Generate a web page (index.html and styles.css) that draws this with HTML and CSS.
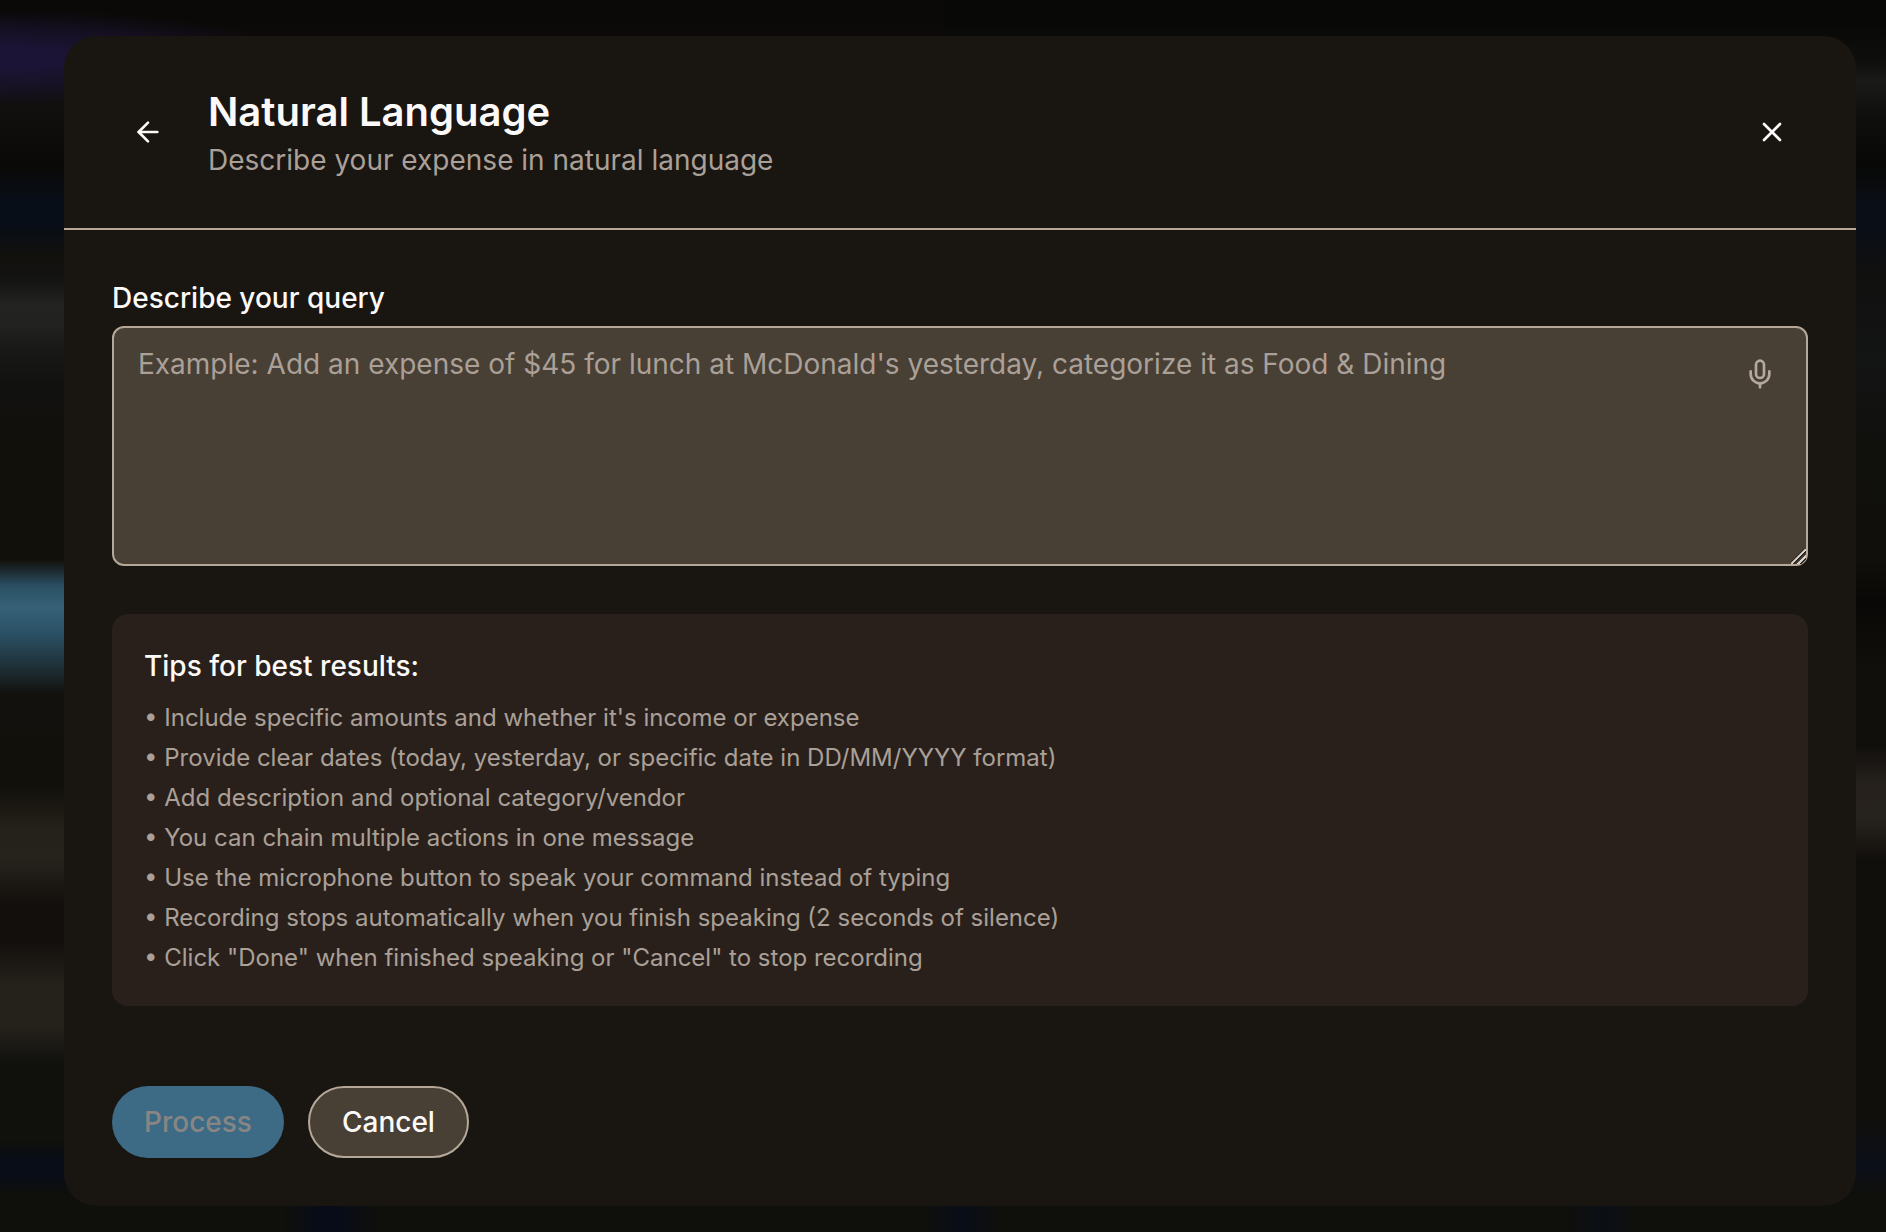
FILE: index.html
```
<!DOCTYPE html>
<html lang="en">
<head>
    <meta charset="UTF-8" />
    <meta name="viewport" content="width=device-width, initial-scale=1" />
    <title>Natural Language</title>
    <link rel="stylesheet" href="styles.css">
</head>
<body>
    <div class="overlay">
        <main class="modal" role="dialog" aria-labelledby="modal-title">
            <header class="modal-header">
                <button type="button" class="icon-btn" aria-label="Back">
                    <svg class="icon" viewBox="0 0 24 24"><path d="m12 19-7-7 7-7"/><path d="M19 12H5"/></svg>
                </button>
                <div class="heading">
                    <h1 id="modal-title">Natural Language</h1>
                    <p>Describe your expense in natural language</p>
                </div>
                <button type="button" class="icon-btn" aria-label="Close">
                    <svg class="icon" viewBox="0 0 24 24"><path d="M18 6 6 18"/><path d="m6 6 12 12"/></svg>
                </button>
            </header>
            <form class="modal-body">
                <label for="query">Describe your query</label>
                <div class="field">
                    <textarea id="query" placeholder="Example: Add an expense of $45 for lunch at McDonald's yesterday, categorize it as Food &amp; Dining"></textarea>
                    <button type="button" class="mic-btn" aria-label="Record">
                        <svg class="icon" viewBox="0 0 24 24"><path d="M12 2a3 3 0 0 0-3 3v7a3 3 0 0 0 6 0V5a3 3 0 0 0-3-3Z"/><path d="M19 10v2a7 7 0 0 1-14 0v-2"/><path d="M12 19v3"/></svg>
                    </button>
                </div>
                <section class="tips">
                    <h2>Tips for best results:</h2>
                    <ul>
                        <li>• Include specific amounts and whether it's income or expense</li>
                        <li>• Provide clear dates (today, yesterday, or specific date in DD/MM/YYYY format)</li>
                        <li>• Add description and optional category/vendor</li>
                        <li>• You can chain multiple actions in one message</li>
                        <li>• Use the microphone button to speak your command instead of typing</li>
                        <li>• Recording stops automatically when you finish speaking (2 seconds of silence)</li>
                        <li>• Click "Done" when finished speaking or "Cancel" to stop recording</li>
                    </ul>
                </section>
                <div class="actions">
                    <button type="submit" class="btn btn-primary" disabled>Process</button>
                    <button type="button" class="btn btn-secondary">Cancel</button>
                </div>
            </form>
        </main>
    </div>
</body>
</html>
```
FILE: styles.css
```
*{
    box-sizing: border-box;
}
body{
    margin: 0;
    font-family: Inter, "Liberation Sans", sans-serif;
    font-size: 28px;
    line-height: 40px;
    color: #fcfaf8;
    background: #0f0f0b;
}
h1,h2,p,ul{
    margin: 0;
    padding: 0;
}
button,textarea{
    font: inherit;
    color: inherit;
}

/* blurred page behind the dialog */
.overlay{
    min-height: 100vh;
    padding: 36px 30px 26px 64px;
    background:
        radial-gradient(ellipse 290px 48px at 0 58px, #1c1436 20%, rgba(28,20,54,.5) 65%, rgba(28,20,54,0)),
        linear-gradient(90deg, transparent 15%, #070c18 17%, #070c18 18%, transparent 20%, transparent 49%, #080d18 51%, transparent 53%, transparent 83%, #0b0f16 85%, transparent 87%) bottom / 100% 26px no-repeat,
        linear-gradient(#0b0908 20px, #11100e 110px, #0a0907 165px, #080e17 200px, #080e17 225px, #11100d 255px, #141413 280px, #232322 305px, #222221 325px, #181817 350px, #111110 385px, #12100b 450px, #12100b 560px, #2b5064 586px, #376178 608px, #2a5064 634px, #20333c 664px, #12110d 694px, #12100b 785px, #25211b 830px, #26221c 860px, #120f0c 905px, #120f0c 940px, #25221c 985px, #25221c 1025px, #10100c 1065px, #10100c 1140px, #080d17 1160px, #080d17 1175px, #0f0f0b 1195px) left / 50% 100% no-repeat,
        linear-gradient(#080806 20px, #0e0e0c 60px, #1a1a18 82px, #0f0f0e 115px, #080806 165px, #0a0e16 205px, #0a0e16 230px, #10100f 270px, #131414 360px, #10100d 450px, #100f0b 560px, #090806 600px, #100f0b 670px, #110f0c 745px, #26211d 785px, #26221d 820px, #110f0c 860px, #100f0c 1120px, #0b0f19 1165px, #0f0f0b 1195px) right / 50% 100% no-repeat;
}
.modal{
    border-radius: 32px;
    background: #191511;
}
.modal-header{
    display: flex;
    align-items: center;
    gap: 24px;
    padding: 48px;
    border-bottom: 2px solid #b5a899;
}
.heading{
    flex: 1;
}
.heading h1{
    font-size: 40px;
    font-weight: 600;
    line-height: 56px;
}
.heading p{
    color: #aaa098;
}
.icon-btn,.mic-btn{
    display: flex;
    align-items: center;
    justify-content: center;
    padding: 0;
    border: 0;
    border-radius: 50%;
    background: none;
    cursor: pointer;
}
.icon-btn{
    width: 72px;
    height: 72px;
}
.icon{
    width: 32px;
    height: 32px;
    fill: none;
    stroke: currentColor;
    stroke-width: 2;
    stroke-linecap: round;
    stroke-linejoin: round;
}
.modal-body{
    padding: 48px;
}
.modal-body label{
    display: block;
    margin-bottom: 8px;
    font-weight: 500;
}
.field{
    position: relative;
    margin-bottom: 48px;
}
.field textarea{
    display: block;
    width: 100%;
    height: 240px;
    padding: 16px 96px 16px 24px;
    border: 2px solid #b5a899;
    border-radius: 12px;
    background: #483f35;
    resize: vertical;
}
.field textarea::placeholder{
    color: #aaa098;
    opacity: 1;
}
.field textarea::-webkit-resizer{
    background: linear-gradient(135deg, transparent 42%, #2a2520 43%, #2a2520 46%, #d8d2ca 47%, #d8d2ca 54%, #2a2520 55%, #2a2520 62%, transparent 63%, transparent 69%, #d8d2ca 70%, #d8d2ca 77%, #2a2520 78%, #2a2520 84%, transparent 85%);
}
.mic-btn{
    position: absolute;
    top: 16px;
    right: 16px;
    width: 64px;
    height: 64px;
    color: #b5a89e;
}
.tips{
    padding: 32px;
    border-radius: 16px;
    background: #29201b;
}
.tips h2{
    margin-bottom: 16px;
    font-size: 28px;
    font-weight: 500;
}
.tips ul{
    display: grid;
    gap: 8px;
    list-style: none;
    font-size: 24px;
    line-height: 32px;
    color: #aaa098;
}
.actions{
    display: flex;
    gap: 24px;
    margin-top: 80px;
}
.btn{
    height: 72px;
    padding: 0 32px;
    border: 0;
    border-radius: 36px;
    font-weight: 500;
    cursor: pointer;
}
.btn-primary{
    background: #3d6a85;
    color: #888684;
}
.btn-secondary{
    border: 2px solid #b5a899;
    background: #483f35;
}
```
